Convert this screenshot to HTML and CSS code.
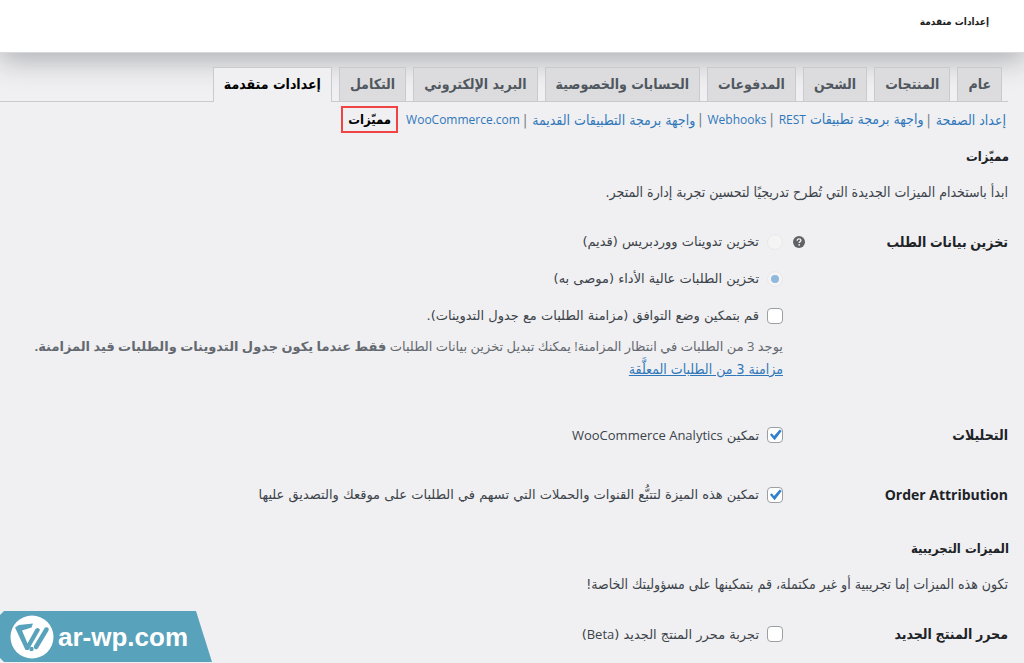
FILE: index.html
```html
<!DOCTYPE html>
<html lang="ar" dir="rtl">
<head>
<meta charset="utf-8">
<meta name="viewport" content="width=device-width, initial-scale=1">
<title>إعدادات متقدمة</title>
<link rel="stylesheet" href="styles.css">
</head>
<body>
<header class="page-header"><h1 class="page-title">إعدادات متقدمة</h1></header>
<main class="wrap">
  <nav class="tabs">
    <a class="tab" href="#general">عام</a>
    <a class="tab" href="#products">المنتجات</a>
    <a class="tab" href="#shipping">الشحن</a>
    <a class="tab" href="#payments">المدفوعات</a>
    <a class="tab" href="#accounts">الحسابات والخصوصية</a>
    <a class="tab" href="#email">البريد الإلكتروني</a>
    <a class="tab" href="#integration">التكامل</a>
    <a class="tab tab-active" href="#advanced">إعدادات متقدمة</a>
  </nav>
  <ul class="sections">
    <li><a href="#page-setup">إعداد الصفحة</a></li>
    <li><a href="#rest">واجهة برمجة تطبيقات <span class="latin" lang="en">REST</span></a></li>
    <li><a href="#webhooks"><span class="latin" lang="en">Webhooks</span></a></li>
    <li><a href="#legacy">واجهة برمجة التطبيقات القديمة</a></li>
    <li><a href="#woo"><span class="latin" lang="en">WooCommerce.com</span></a></li>
    <li class="section-current"><a class="current" href="#features">مميّزات</a></li>
  </ul>

  <h2 class="heading">مميّزات</h2>
  <p class="intro">ابدأ باستخدام الميزات الجديدة التي تُطرح تدريجيًا لتحسين تجربة إدارة المتجر.</p>

  <div class="form">
    <div class="row row-storage" role="radiogroup" aria-labelledby="storage-title">
      <h3 class="row-title" id="storage-title">تخزين بيانات الطلب</h3>
      <div class="help">
        <svg class="help-icon" viewBox="0 0 12 12" aria-hidden="true"><circle cx="6" cy="6" r="6" fill="#606165"/><path d="M4.2 4.8C4.2 3.5 5 2.9 6.1 2.9c1 0 1.8.6 1.8 1.5 0 1.2-1.7 1.3-1.7 2.6" fill="none" stroke="#f0f0f1" stroke-width="1.4"/><circle cx="6.2" cy="8.8" r=".9" fill="#f0f0f1"/></svg>
      </div>
      <div class="fields">
        <label class="choice" for="legacy-storage"><input class="radio" type="radio" name="storage" id="legacy-storage" disabled><span>تخزين تدوينات ووردبريس (قديم)</span></label>
        <label class="choice" for="fast-storage"><input class="radio" type="radio" name="storage" id="fast-storage" checked disabled><span>تخزين الطلبات عالية الأداء (موصى به)</span></label>
        <label class="choice" for="compat"><input class="check" type="checkbox" id="compat"><span>قم بتمكين وضع التوافق (مزامنة الطلبات مع جدول التدوينات).</span></label>
        <p class="description">يوجد 3 من الطلبات في انتظار المزامنة! يمكنك تبديل تخزين بيانات الطلبات <strong>فقط عندما يكون جدول التدوينات والطلبات قيد المزامنة.</strong><br><a class="sync" href="#sync">مزامنة 3 من الطلبات المعلَّقة</a></p>
      </div>
    </div>
    <div class="row">
      <h3 class="row-title">التحليلات</h3>
      <div class="fields"><label class="choice" for="analytics"><input class="check" type="checkbox" id="analytics" checked><span>تمكين <span class="choice-latin" lang="en">WooCommerce Analytics</span></span></label></div>
    </div>
    <div class="row">
      <h3 class="row-title">Order Attribution</h3>
      <div class="fields"><label class="choice" for="attribution"><input class="check" type="checkbox" id="attribution" checked><span>تمكين هذه الميزة لتتبُّع القنوات والحملات التي تسهم في الطلبات على موقعك والتصديق عليها</span></label></div>
    </div>
  </div>

  <h2 class="heading">الميزات التجريبية</h2>
  <p class="intro">تكون هذه الميزات إما تجريبية أو غير مكتملة، قم بتمكينها على مسؤوليتك الخاصة!</p>

  <div class="form">
    <div class="row">
      <h3 class="row-title">محرر المنتج الجديد</h3>
      <div class="fields"><label class="choice" for="editor"><input class="check" type="checkbox" id="editor"><span>تجربة محرر المنتج الجديد (<span class="choice-latin" lang="en">Beta</span>)</span></label></div>
    </div>
  </div>
</main>
<div class="watermark" dir="ltr">
  <svg class="logo" viewBox="0 0 44 44" aria-hidden="true"><circle cx="22" cy="22" r="21.5" fill="#fff"/><path d="M5 12.500L9 10l14-1.500-1.500 4L12 15.500l5.500 13L25.500 14q3-2.500 4.500 1L18.500 35h-3z" fill="#58a2bb"/><path d="M26 32L36.500 14.500" fill="none" stroke="#58a2bb" stroke-width="4.500" stroke-linecap="round"/><circle cx="21.500" cy="34" r="2.200" fill="#58a2bb"/></svg>
  <span>ar-wp.com</span>
</div>
</body>
</html>
```
FILE: styles.css
```css
* { box-sizing: border-box; }

body {
  margin: 0;
  min-height: 100vh;
  overflow: hidden;
  background: #f0f0f2;
  color: #3c434a;
  font: 13px/20px "Open Sans", "DejaVu Sans", sans-serif;
}

h1, h2, h3, p, ul { margin: 0; padding: 0; }

.page-header {
  position: relative;
  height: 52px;
  padding: 12px 35px;
  background: #fff;
  box-shadow: 0 0 0 1px #d8d9dc, 0 8px 28px rgba(40, 45, 55, .34);
}

.page-title {
  color: #1e1e1e;
  font: bold 10px/20px "DejaVu Sans Condensed", "DejaVu Sans", sans-serif;
}

.wrap { position: relative; }

.tabs {
  display: flex;
  gap: 7px;
  margin-right: 16px;
  padding: 15px 6px 0 0;
  border-bottom: 1px solid #c9cacd;
}

.tab {
  padding: 5px 10px;
  border: 1px solid #c9cacd;
  border-bottom: 0;
  background: #dcdcde;
  color: #50575e;
  font: bold 14px/23px "DejaVu Sans Condensed", "DejaVu Sans", sans-serif;
  text-decoration: none;
  white-space: nowrap;
}

.tab-active {
  margin-bottom: -1px;
  background: #f0f0f2;
  color: #000;
}

.sections {
  display: flex;
  align-items: center;
  padding: 4px 18px 0 0;
  list-style: none;
  font-family: "DejaVu Sans Condensed", "DejaVu Sans", sans-serif;
  font-size: 14px;
  white-space: nowrap;
}

.sections li { line-height: 26px; }
.sections li:not(:nth-last-child(-n+2))::after { content: "|"; margin: 0 5px 0 3px; color: #787c82; }
.sections a { color: #2f77b9; text-decoration: none; }
.sections .section-current {
  margin-right: 8px;
  padding: 0 5px;
  border: 2px solid #f04343;
  line-height: 22px;
}
.sections .current {
  color: #000;
  font-size: 13px;
  font-weight: bold;
}
.latin { font-family: "Open Sans", sans-serif; font-size: 12px; }

.heading {
  padding: 14px 15px 0 0;
  color: #1d2327;
  font: bold 13px/20px "DejaVu Sans Condensed", "DejaVu Sans", sans-serif;
}

.intro {
  padding: 15px 16px 0 0;
  font: 14px/20px "DejaVu Sans Condensed", "DejaVu Sans", sans-serif;
}

.form { padding-top: 10px; }

.row {
  position: relative;
  display: grid;
  grid-template-columns: 210px minmax(0, 1fr);
  padding: 20px 16px;
}

.row-storage { padding-bottom: 24px; }

.row-title {
  color: #1d2327;
  font: bold 14px/20px "Open Sans", "DejaVu Sans Condensed", "DejaVu Sans", sans-serif;
}

.help {
  position: absolute;
  top: 24px;
  right: 219px;
}
.help-icon { display: block; width: 12px; height: 12px; }

.fields { padding-right: 15px; white-space: nowrap; }

.choice {
  display: flex;
  align-items: center;
  gap: 8px;
  height: 20px;
  font-family: "DejaVu Sans", sans-serif;
}
.choice + .choice { margin-top: 17px; }
.choice-latin { font-family: "Open Sans", sans-serif; }

.check, .radio {
  flex: none;
  width: 16px;
  height: 16px;
  margin: 0;
  border: 1px solid #9c9fa4;
  border-radius: 4px;
  background: #fff;
  appearance: none;
}
.check:checked::before {
  content: "";
  display: block;
  width: 14px;
  height: 14px;
  background: #2f80cd;
  clip-path: polygon(14% 48%, 27% 38%, 43% 58%, 84% 10%, 98% 21%, 47% 88%);
}
.radio {
  display: grid;
  place-items: center;
  border-color: #e9e9eb;
  border-radius: 50%;
  background: #f4f4f5;
}
.radio:checked::before {
  content: "";
  width: 8px;
  height: 8px;
  border-radius: 50%;
  background: #8fb8dd;
}

.description {
  margin-top: 9px;
  color: #646970;
  line-height: 23px;
}
.sync {
  color: #2f77b9;
  font-family: "DejaVu Sans Condensed", "DejaVu Sans", sans-serif;
  font-size: 14px;
}

.watermark {
  position: fixed;
  bottom: 1px;
  left: 0;
  display: flex;
  align-items: center;
  gap: 4px;
  width: 212px;
  height: 51px;
  padding-left: 10px;
  background: #58a2bb;
  clip-path: polygon(4px 0, 196px 0, 100% 100%, 4px 100%, 0 92%, 0 8%);
  color: #fff;
  font: bold 26px/30px "Liberation Sans", Arial, sans-serif;
}
.logo { flex: none; width: 44px; height: 44px; }
```
